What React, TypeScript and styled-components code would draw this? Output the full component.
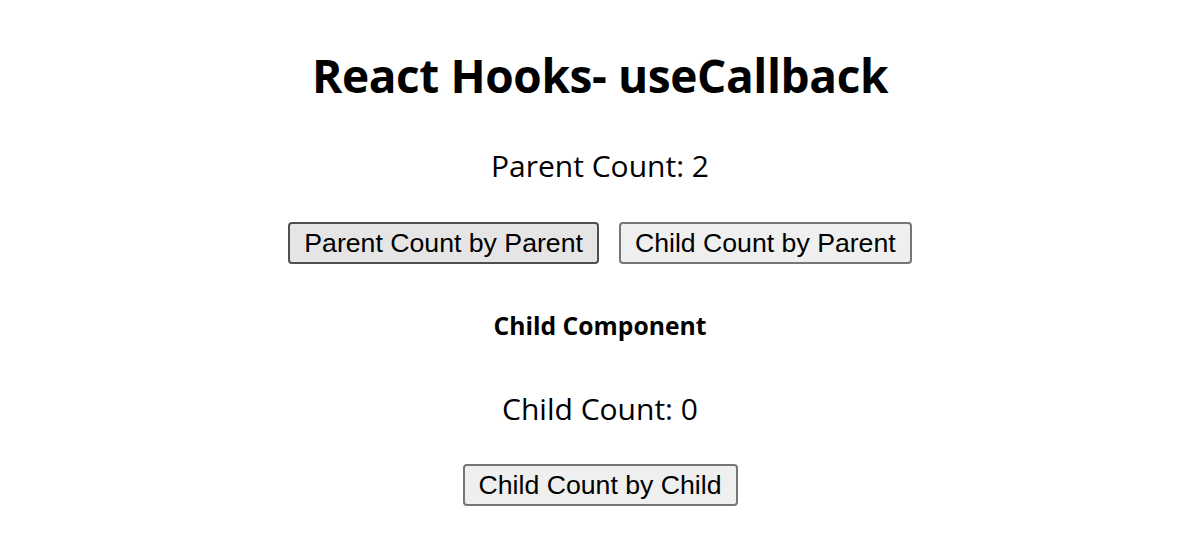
import { useCallback, useState } from 'react'
import styled, { createGlobalStyle } from 'styled-components'

const GlobalStyle = createGlobalStyle`
  body {
    margin: 0;
    background: #fff;
    color: #000;
    font-family: 'Open Sans', 'Noto Sans', sans-serif;
  }
`

const Page = styled.div`
  display: flex;
  flex-direction: column;
  align-items: center;
  text-align: center;
  padding-top: 46px;
`

const Title = styled.h1`
  margin: 0;
  font-size: 46px;
  line-height: 58px;
  font-weight: 700;
  letter-spacing: -0.4px;
`

const Count = styled.p<{ $top: number }>`
  margin: ${(p) => p.$top}px 0 0;
  font-size: 30px;
  line-height: 40px;
  font-weight: 400;
`

const SubTitle = styled.h4`
  margin: 46px 0 0;
  font-size: 24.7px;
  line-height: 32px;
  font-weight: 700;
`

const ButtonRow = styled.div<{ $top: number }>`
  display: flex;
  gap: 20px;
  margin-top: ${(p) => p.$top}px;
`

const Button = styled.button<{ $hover?: boolean }>`
  font-family: 'Liberation Sans', Arial, sans-serif;
  font-size: 26.67px;
  line-height: 30px;
  padding: 4px 14px;
  color: #000;
  background: ${(p) => (p.$hover ? '#e5e5e5' : '#efefef')};
  border: 2px solid ${(p) => (p.$hover ? '#4f4f4f' : '#767676')};
  border-radius: 4px;
  cursor: default;
`

function Child({ count, onIncrement }: { count: number; onIncrement: () => void }) {
  return (
    <>
      <SubTitle>Child Component</SubTitle>
      <Count $top={47}>Child Count: {count}</Count>
      <ButtonRow $top={35}>
        <Button onClick={onIncrement}>Child Count by Child</Button>
      </ButtonRow>
    </>
  )
}

export default function App() {
  const [parentCount, setParentCount] = useState(2)
  const [childCount, setChildCount] = useState(0)

  const incrementChild = useCallback(() => setChildCount((c) => c + 1), [])

  return (
    <>
      <GlobalStyle />
      <Page>
        <Title>React Hooks- useCallback</Title>
        <Count $top={42}>Parent Count: {parentCount}</Count>
        <ButtonRow $top={36}>
          <Button $hover onClick={() => setParentCount((c) => c + 1)}>
            Parent Count by Parent
          </Button>
          <Button onClick={incrementChild}>Child Count by Parent</Button>
        </ButtonRow>
        <Child count={childCount} onIncrement={incrementChild} />
      </Page>
    </>
  )
}
